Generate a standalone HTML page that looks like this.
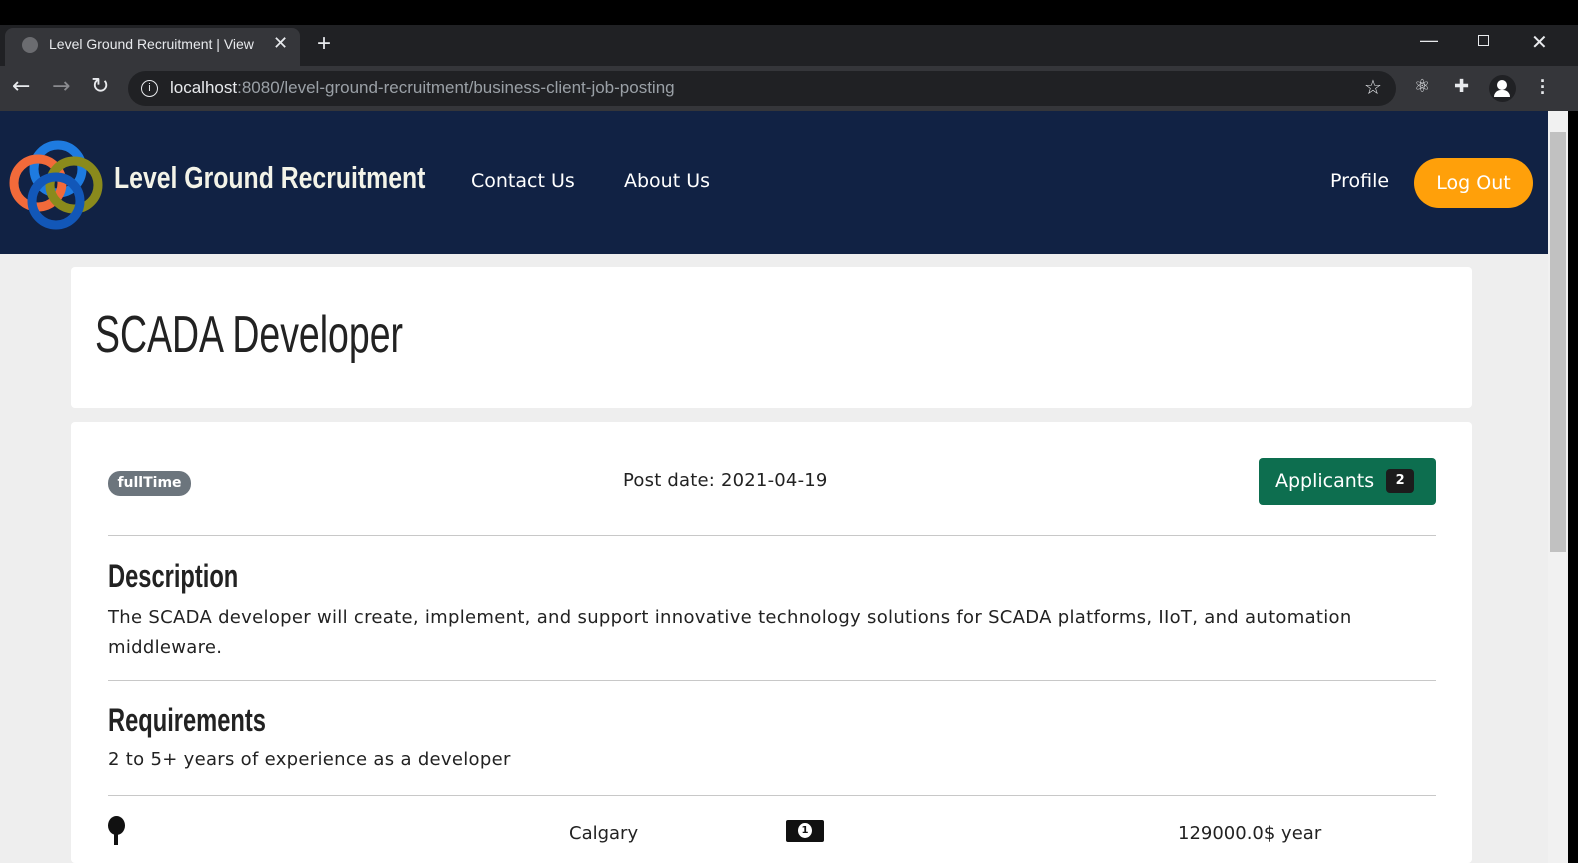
<!DOCTYPE html>
<html><head><style>
*{margin:0;padding:0;box-sizing:border-box}
body{width:1578px;height:863px;overflow:hidden;background:#000;font-family:"DejaVu Sans","Liberation Sans",sans-serif;position:relative}
.abs{position:absolute}
.cond{font-family:"Liberation Sans",sans-serif;display:inline-block;transform-origin:left center}
</style></head><body>
<div class="abs" style="left:0;top:25px;width:1578px;height:41px;background:#202124"></div>
<div class="abs" style="left:5px;top:28px;width:295px;height:38px;background:#35363a;border-radius:8px 8px 0 0"></div>
<div class="abs" style="left:22px;top:37px;width:16px;height:16px;border-radius:50%;background:#6b6c70"></div>
<div class="abs" style="left:49px;top:36px;color:#e8eaed;font:14px 'Liberation Sans',sans-serif">Level Ground Recruitment | View</div>
<div class="abs" style="left:273px;top:33px;color:#e8eaed;font:18px 'Liberation Sans'">✕</div>
<div class="abs" style="left:317px;top:30px;color:#e8eaed;font:24px 'Liberation Sans'">+</div>
<div class="abs" style="left:1420px;top:30px;color:#e8eaed;font:18px 'Liberation Sans'">—</div>
<div class="abs" style="left:1478px;top:35px;width:11px;height:11px;border:1.5px solid #e8eaed"></div>
<div class="abs" style="left:1531px;top:30px;color:#e8eaed;font:20px 'Liberation Sans'">✕</div>
<div class="abs" style="left:0;top:66px;width:1578px;height:45px;background:#35363a"></div>
<div class="abs" style="left:12px;top:74px;color:#e8eaed;font:22px 'DejaVu Sans'">←</div>
<div class="abs" style="left:52px;top:74px;color:#8a8b8f;font:22px 'DejaVu Sans'">→</div>
<div class="abs" style="left:91px;top:74px;color:#e8eaed;font:22px 'DejaVu Sans'">↻</div>
<div class="abs" style="left:128px;top:71px;width:1268px;height:35px;border-radius:18px;background:#202124"></div>
<div class="abs" style="left:141px;top:80px;width:17px;height:17px;border:1.5px solid #e8eaed;border-radius:50%;color:#e8eaed;font:11px 'Liberation Sans';text-align:center;line-height:14px">i</div>
<div class="abs" style="left:170px;top:78px;font:17px 'Liberation Sans';color:#9aa0a6"><span style="color:#e8eaed">localhost</span>:8080/level-ground-recruitment/business-client-job-posting</div>
<div class="abs" style="left:1364px;top:75px;color:#e8eaed;font:20px 'DejaVu Sans'">☆</div>
<div class="abs" style="left:1414px;top:76px;color:#e8eaed;font:18px 'DejaVu Sans'">⚛</div>
<div class="abs" style="left:1454px;top:76px;color:#e8eaed;font:18px 'DejaVu Sans'">✚</div>
<div class="abs" style="left:1489px;top:75px;width:27px;height:27px;border-radius:50%;background:#202124"></div>
<div class="abs" style="left:1497px;top:80px;width:10px;height:10px;border-radius:50%;background:#fff"></div>
<div class="abs" style="left:1494px;top:90px;width:16px;height:7px;border-radius:8px 8px 0 0;background:#fff"></div>
<div class="abs" style="left:1540px;top:78px;color:#e8eaed;font:bold 18px 'Liberation Sans';line-height:6px">·<br>·<br>·</div>

<div class="abs" style="left:0;top:111px;width:1548px;height:752px;background:#eeeeee"></div>
<div class="abs" style="left:1548px;top:111px;width:20px;height:752px;background:#f1f1f1"></div>
<div class="abs" style="left:1550px;top:132px;width:16px;height:420px;background:#c1c1c1"></div>
<div class="abs" style="left:1568px;top:111px;width:10px;height:752px;background:#000"></div>
<div class="abs" style="left:0;top:111px;width:1548px;height:143px;background:#112244"></div>
<svg class="abs" style="left:8px;top:135px" width="96" height="96" viewBox="0 0 96 96">
<circle cx="50" cy="34" r="24" fill="none" stroke="#1e7be0" stroke-width="9"/>
<circle cx="30" cy="48" r="24" fill="none" stroke="#f26a3a" stroke-width="9"/>
<circle cx="66" cy="50" r="24" fill="none" stroke="#8a8a1c" stroke-width="9"/>
<circle cx="48" cy="66" r="24" fill="none" stroke="#1257b8" stroke-width="9"/>
</svg>
<div class="abs" style="left:114px;top:160px;color:#f3f3e8;font:bold 31px 'Liberation Sans'"><span class="cond" style="transform:scaleX(0.8)">Level Ground Recruitment</span></div>
<div class="abs" style="left:471px;top:170px;color:#fff;font:19px 'DejaVu Sans'">Contact Us</div>
<div class="abs" style="left:624px;top:170px;color:#fff;font:19px 'DejaVu Sans'">About Us</div>
<div class="abs" style="left:1330px;top:170px;color:#fff;font:19px 'DejaVu Sans'">Profile</div>
<div class="abs" style="left:1414px;top:158px;width:119px;height:50px;border-radius:25px;background:#ffa00a;color:#fff;font:19px 'DejaVu Sans';text-align:center;line-height:50px">Log Out</div>

<div class="abs" style="left:71px;top:267px;width:1401px;height:141px;background:#fff;border-radius:4px"></div>
<div class="abs" style="left:95px;top:305px;color:#222;font:52px 'Liberation Sans'"><span class="cond" style="transform:scaleX(0.72)">SCADA Developer</span></div>
<div class="abs" style="left:71px;top:422px;width:1401px;height:441px;background:#fff;border-radius:4px"></div>
<div class="abs" style="left:108px;top:471px;width:83px;height:25px;border-radius:12px;background:#6c757d;color:#fff;font:bold 14px 'DejaVu Sans';text-align:center;line-height:25px">fullTime</div>
<div class="abs" style="left:623px;top:470px;color:#222;font:18px 'DejaVu Sans';letter-spacing:0.2px">Post date: 2021-04-19</div>
<div class="abs" style="left:1259px;top:458px;width:177px;height:47px;border-radius:4px;background:#0d6e4f;color:#fff;font:19px 'DejaVu Sans';line-height:47px;padding-left:16px">Applicants <span style="display:inline-block;background:#1c1c1c;border-radius:4px;font:bold 13px 'DejaVu Sans';width:28px;height:24px;line-height:24px;text-align:center;vertical-align:3px;margin-left:6px">2</span></div>
<div class="abs" style="left:108px;top:535px;width:1328px;height:1px;background:#c8c8c8"></div>
<div class="abs" style="left:108px;top:558px;color:#222;font:bold 32px 'Liberation Sans'"><span class="cond" style="transform:scaleX(0.74)">Description</span></div>
<div class="abs" style="left:108px;top:603px;width:1320px;color:#222;font:18px/30px 'DejaVu Sans';letter-spacing:0.3px">The SCADA developer will create, implement, and support innovative technology solutions for SCADA platforms, IIoT, and automation middleware.</div>
<div class="abs" style="left:108px;top:680px;width:1328px;height:1px;background:#c8c8c8"></div>
<div class="abs" style="left:108px;top:702px;color:#222;font:bold 32px 'Liberation Sans'"><span class="cond" style="transform:scaleX(0.74)">Requirements</span></div>
<div class="abs" style="left:108px;top:749px;color:#222;font:18px 'DejaVu Sans';letter-spacing:0.3px">2 to 5+ years of experience as a developer</div>
<div class="abs" style="left:108px;top:795px;width:1328px;height:1px;background:#c8c8c8"></div>
<div class="abs" style="left:108px;top:816px;width:17px;height:19px;border-radius:50%;background:#111"></div>
<div class="abs" style="left:114px;top:832px;width:4px;height:13px;background:#111"></div>
<div class="abs" style="left:569px;top:823px;color:#222;font:18px 'DejaVu Sans'">Calgary</div>
<div class="abs" style="left:786px;top:820px;width:38px;height:22px;background:#111;border-radius:2px"></div>
<div class="abs" style="left:798px;top:823px;width:14px;height:15px;border-radius:50%;background:#fff;color:#111;font:bold 10px 'DejaVu Sans';text-align:center;line-height:15px">1</div>
<div class="abs" style="left:1178px;top:823px;color:#222;font:18px 'DejaVu Sans'">129000.0$ year</div>
</body></html>
